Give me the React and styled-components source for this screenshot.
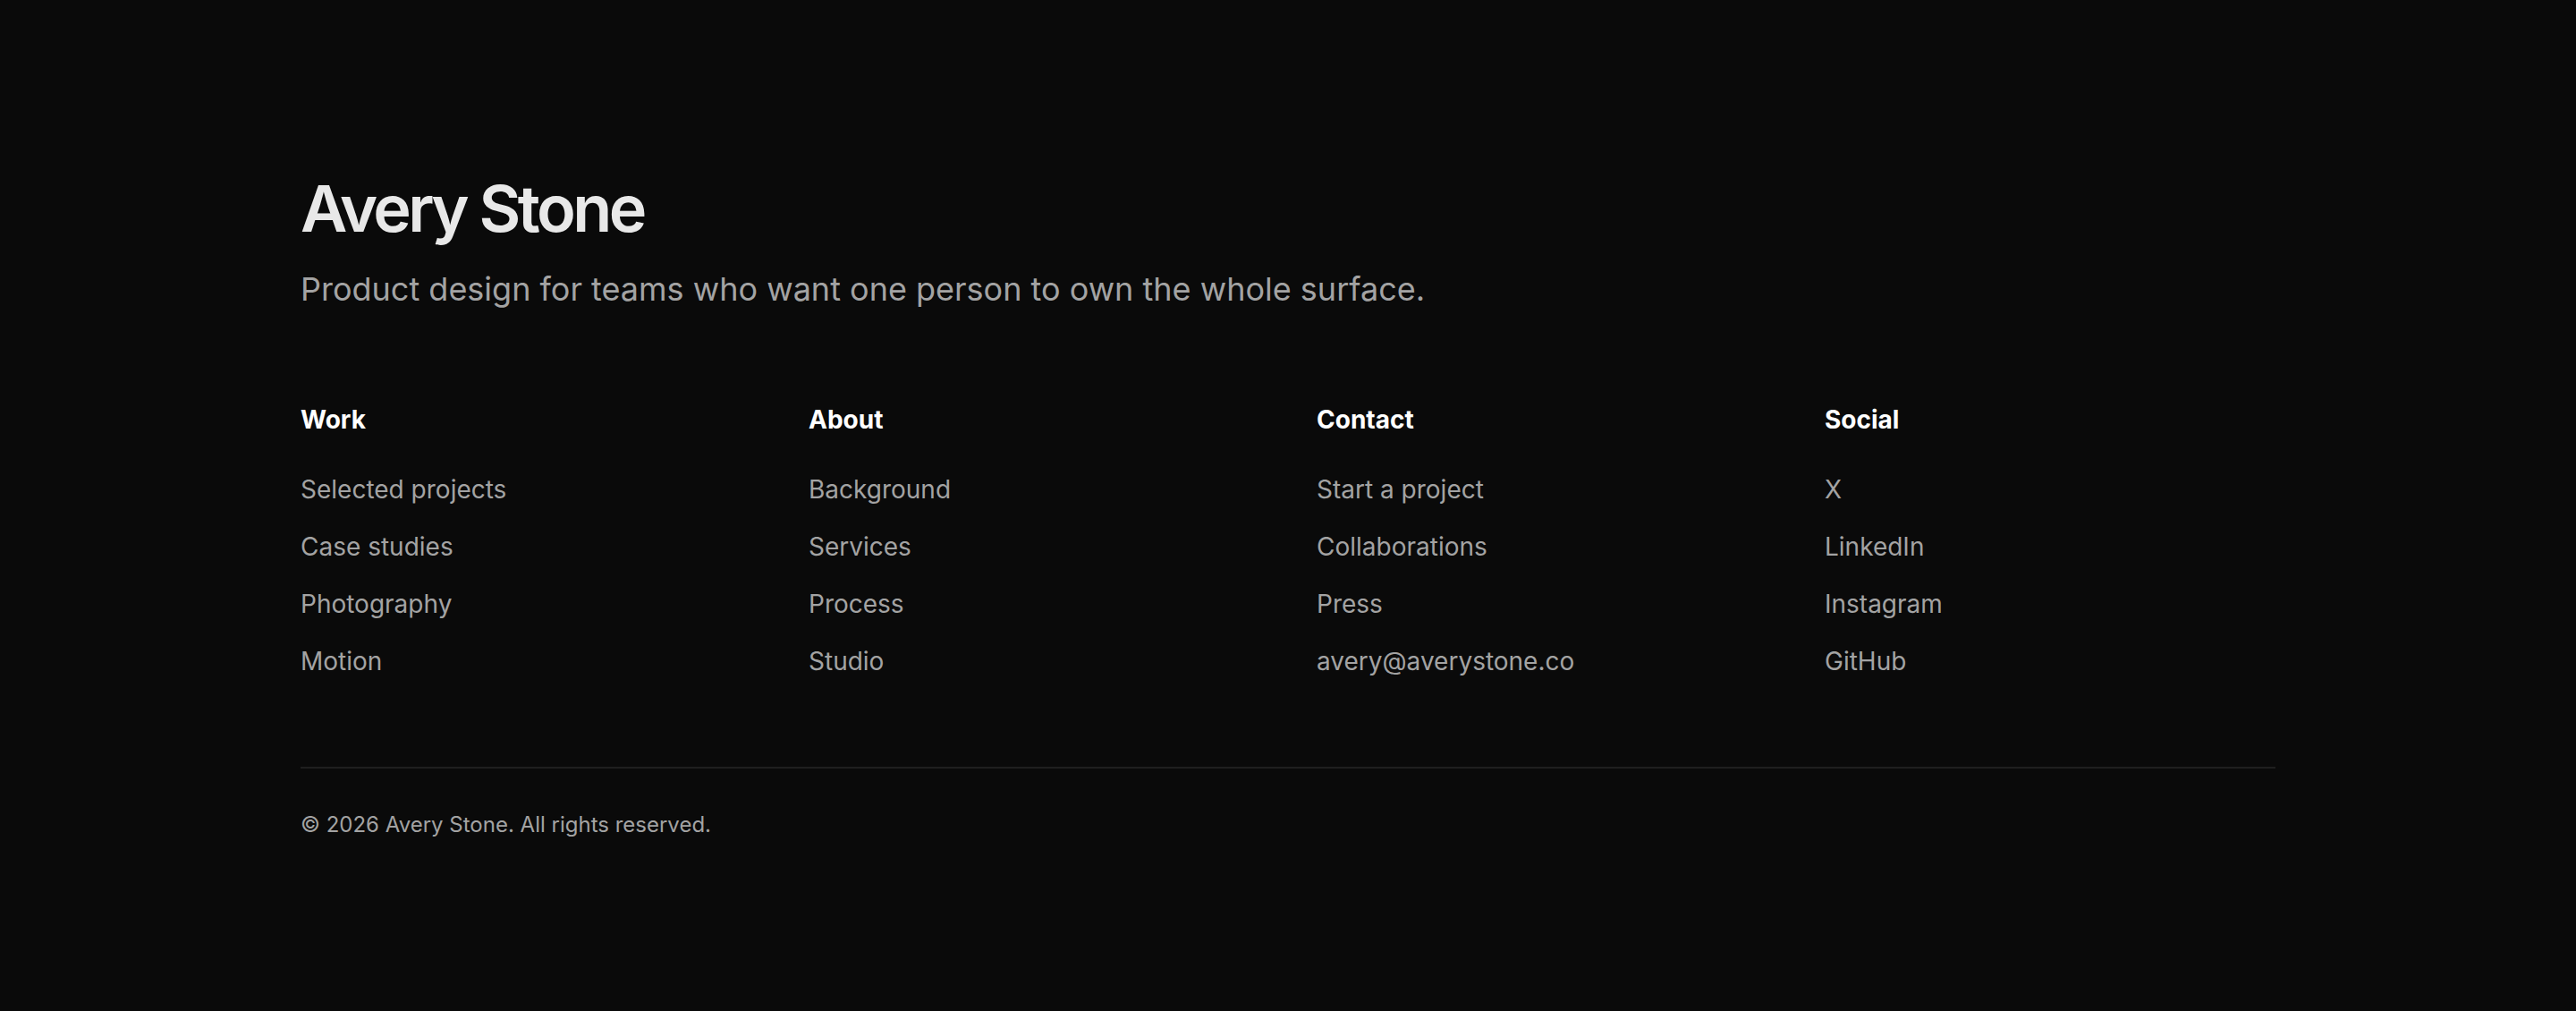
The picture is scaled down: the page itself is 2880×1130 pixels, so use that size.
import React from "react";
import styled, { createGlobalStyle } from "styled-components";

const Global = createGlobalStyle`
  * { box-sizing: border-box; }
  html, body { margin: 0; padding: 0; background: #0a0a0a; }
  body { font-family: Inter, "Noto Sans", sans-serif; -webkit-font-smoothing: antialiased; }
`;

const Footer = styled.footer`
  min-height: 1130px;
  background: #0a0a0a;
  padding: 193px 0 120px;
`;

const Inner = styled.div`
  max-width: 2208px;
  margin: 0 auto;
`;

const Brand = styled.h2`
  margin: 0;
  font-size: 72px;
  line-height: 1.1;
  font-weight: 600;
  letter-spacing: -0.05em;
  color: #e8e8e8;
`;

const Tagline = styled.p`
  margin: 24px 0 0;
  font-size: 36px;
  line-height: 1.5;
  font-weight: 400;
  color: #a3a3a3;
`;

const Columns = styled.div`
  display: grid;
  grid-template-columns: repeat(4, 1fr);
  gap: 64px;
  margin-top: 100px;
`;

const Column = styled.div`
  display: flex;
  flex-direction: column;
`;

const Heading = styled.h3`
  margin: 0;
  font-size: 28px;
  line-height: 1.4;
  font-weight: 700;
  color: #ffffff;
`;

const LinkList = styled.ul`
  list-style: none;
  margin: 38px 0 0;
  padding: 0;
  display: flex;
  flex-direction: column;
  gap: 24px;
`;

const LinkItem = styled.a`
  display: block;
  font-size: 28px;
  line-height: 40px;
  color: #a3a3a3;
  text-decoration: none;
`;

const Divider = styled.hr`
  margin: 98px 0 0;
  border: 0;
  height: 2px;
  background: #1f1f1f;
`;

const Copyright = styled.p`
  margin: 45px 0 0;
  font-size: 24px;
  line-height: 1.5;
  color: #a3a3a3;
`;

const columns = [
  { title: "Work", links: ["Selected projects", "Case studies", "Photography", "Motion"] },
  { title: "About", links: ["Background", "Services", "Process", "Studio"] },
  { title: "Contact", links: ["Start a project", "Collaborations", "Press", "avery@averystone.co"] },
  { title: "Social", links: ["X", "LinkedIn", "Instagram", "GitHub"] },
];

export default function App() {
  return (
    <>
      <Global />
      <Footer>
        <Inner>
          <Brand>Avery Stone</Brand>
          <Tagline>Product design for teams who want one person to own the whole surface.</Tagline>
          <Columns>
            {columns.map((c) => (
              <Column key={c.title}>
                <Heading>{c.title}</Heading>
                <LinkList>
                  {c.links.map((l) => (
                    <li key={l}>
                      <LinkItem href="#">{l}</LinkItem>
                    </li>
                  ))}
                </LinkList>
              </Column>
            ))}
          </Columns>
          <Divider />
          <Copyright>© 2026 Avery Stone. All rights reserved.</Copyright>
        </Inner>
      </Footer>
    </>
  );
}
